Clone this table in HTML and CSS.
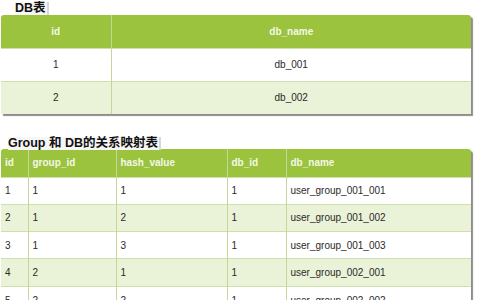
FILE: index.html
```html
<!DOCTYPE html>
<html>
<head>
<meta charset="utf-8">
<link rel="stylesheet" href="styles.css">
</head>
<body>
<div class="title t1"><span>DB表</span></div>
<div class="wrap w1">
<table class="tbl center">
<colgroup><col style="width:110px"><col></colgroup>
<tr class="head"><th>id</th><th>db_name</th></tr>
<tr><td>1</td><td>db_001</td></tr>
<tr class="alt"><td>2</td><td>db_002</td></tr>
</table>
</div>
<div class="title t2"><span>Group 和 DB的关系映射表</span></div>
<div class="wrap w2">
<table class="tbl left">
<colgroup><col style="width:27px"><col style="width:88px"><col style="width:111px"><col style="width:59px"><col></colgroup>
<tr class="head"><th>id</th><th>group_id</th><th>hash_value</th><th>db_id</th><th>db_name</th></tr>
<tr><td>1</td><td>1</td><td>1</td><td>1</td><td>user_group_001_001</td></tr>
<tr class="alt"><td>2</td><td>1</td><td>2</td><td>1</td><td>user_group_001_002</td></tr>
<tr><td>3</td><td>1</td><td>3</td><td>1</td><td>user_group_001_003</td></tr>
<tr class="alt"><td>4</td><td>2</td><td>1</td><td>1</td><td>user_group_002_001</td></tr>
<tr><td>5</td><td>2</td><td>2</td><td>1</td><td>user_group_002_002</td></tr>
</table>
</div>
</body>
</html>
```
FILE: styles.css
```css
html, body {
  margin: 0;
  padding: 0;
  background: #fff;
  font-family: "Liberation Sans", Arial, "Noto Sans CJK SC", sans-serif;
  overflow: hidden;
}
.title {
  font-weight: bold;
  font-size: 12.5px;
  line-height: 13px;
  color: #111;
  box-sizing: border-box;
  height: 15px;
  padding-top: 2px;
}
.title span {
  display: inline-block;
  background: #f6f6f6;
  border-right: 2px solid #d8d8d8;
  padding-right: 1px;
}
.t1 { padding-left: 15px; }
.t2 { padding-left: 8px; margin-top: 20px; padding-top: 3px; height: 16px; }
.wrap {
  width: 470px;
  margin-left: 1px;
  border-radius: 3px 3px 0 0;
  overflow: hidden;
  box-shadow: 2px 2px 1px #8d8d8d;
}
.w2 { margin-top: -1px; }
.tbl {
  width: 100%;
  border-collapse: collapse;
  table-layout: fixed;
  font-size: 10px;
  color: #2a2a2a;
}
.tbl th {
  background: #9cc33d;
  color: #f3f8e6;
  font-weight: bold;
}
.tbl td, .tbl th {
  border-left: 1px solid #c3d79a;
  padding: 0 4px;
  white-space: nowrap;
}
.tbl td:first-child, .tbl th:first-child { border-left: none; }
.tbl td { border-top: 1px solid #cfdfae; background: #fff; }
.tbl tr.alt td { background: #eaf2d8; }
.center td, .center th { text-align: center; height: 33px; box-sizing: border-box; }
.left td, .left th { text-align: left; }
.left th { height: 28px; box-sizing: border-box; }
.left td { height: 27.3px; box-sizing: border-box; }
```
